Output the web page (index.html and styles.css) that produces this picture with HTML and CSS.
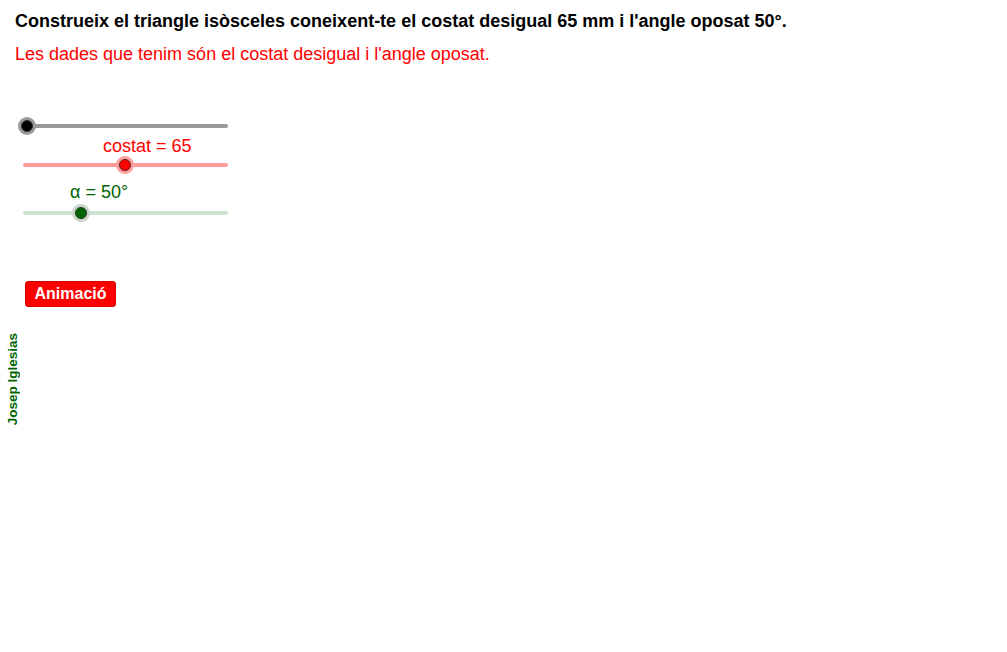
FILE: index.html
```html
<!DOCTYPE html>
<html lang="ca">
<head>
<meta charset="utf-8">
<title>Triangle isòsceles</title>
<link rel="stylesheet" href="styles.css">
</head>
<body>
<div class="page">
  <h1 class="title">Construeix el triangle isòsceles coneixent-te el costat desigual 65 mm i l'angle oposat 50°.</h1>
  <p class="subtitle">Les dades que tenim són el costat desigual i l'angle oposat.</p>

  <div class="track track-gray"><span class="knob knob-black" style="left:4px"></span></div>

  <div class="label label-red">costat = 65</div>
  <div class="track track-red"><span class="knob knob-red" style="left:102px"></span></div>

  <div class="label label-green">α = 50°</div>
  <div class="track track-green"><span class="knob knob-green" style="left:58px"></span></div>

  <button class="anim-btn" type="button">Animació</button>

  <div class="author">Josep Iglesias</div>
</div>
</body>
</html>
```

FILE: styles.css
```css
html, body {
  margin: 0;
  padding: 0;
  background: #ffffff;
}

.page {
  width: 1007px;
  height: 652px;
  font-family: "Liberation Sans", Arial, sans-serif;
  display: flex;
  flex-direction: column;
  align-items: flex-start;
}

.title {
  margin: 11px 0 0 15px;
  font-size: 18px;
  line-height: 20px;
  font-weight: bold;
  color: #000000;
}

.subtitle {
  margin: 13px 0 0 15px;
  font-size: 18px;
  line-height: 20px;
  color: #ff0000;
}

.track {
  position: relative;
  width: 205px;
  height: 4px;
  border-radius: 2px;
  margin-left: 23px;
}

.track-gray {
  margin-top: 60px;
  background: #9a9a9a;
}

.track-red {
  margin-top: 7px;
  background: #ff9c9c;
}

.track-green {
  margin-top: 9px;
  background: #cfe2cf;
}

.label {
  font-size: 18px;
  line-height: 20px;
}

.label-red {
  margin: 8px 0 0 103px;
  color: #ff0000;
}

.label-green {
  margin: 15px 0 0 70px;
  color: #006400;
}

.knob {
  position: absolute;
  top: 50%;
  width: 12px;
  height: 12px;
  border-radius: 50%;
  transform: translate(-50%, -50%);
  box-sizing: border-box;
}

.knob-black {
  background: #000000;
  border: 1px solid #333333;
  box-shadow: 0 0 0 3px #9a9a9a;
}

.knob-red {
  background: #ff0000;
  border: 1px solid #552222;
  box-shadow: 0 0 0 3px #ff9c9c;
}

.knob-green {
  background: #006400;
  border: 1px solid #1c3a1c;
  box-shadow: 0 0 0 3px #c8d4c8;
}

.anim-btn {
  margin: 66px 0 0 25px;
  width: 91px;
  height: 26px;
  padding: 0;
  border: 1px solid #d40000;
  border-radius: 3px;
  background: #ff0000;
  color: #ffffff;
  font-family: "Liberation Sans", Arial, sans-serif;
  font-size: 16px;
  font-weight: bold;
  line-height: 24px;
}

.author {
  margin: 26px 0 0 6px;
  writing-mode: vertical-rl;
  transform: rotate(180deg);
  font-size: 13.5px;
  line-height: 14px;
  font-weight: bold;
  color: #006400;
}
```
